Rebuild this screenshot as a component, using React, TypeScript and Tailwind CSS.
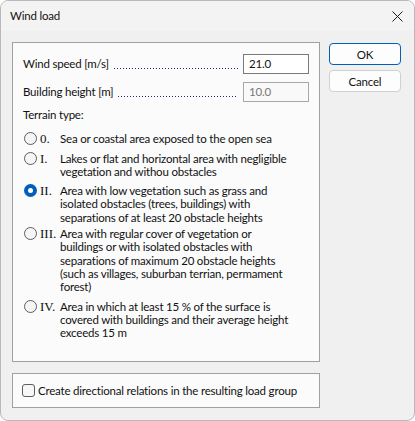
import { useState } from "react";

type Terrain = {
  id: string;
  lines: string[];
  gap: string;
};

const terrains: Terrain[] = [
  { id: "0.", lines: ["Sea or coastal area exposed to the open sea"], gap: "mt-[11px]" },
  {
    id: "I.",
    lines: ["Lakes or flat and horizontal area with negligible", "vegetation and withou obstacles"],
    gap: "mt-[6px]",
  },
  {
    id: "II.",
    lines: [
      "Area with low vegetation such as grass and",
      "isolated obstacles (trees, buildings) with",
      "separations of at least 20 obstacle heights",
    ],
    gap: "mt-[6px]",
  },
  {
    id: "III.",
    lines: [
      "Area with regular cover of vegetation or",
      "buildings or with isolated obstacles with",
      "separations of maximum 20 obstacle heights",
      "(such as villages, suburban terrian, permament",
      "forest)",
    ],
    gap: "mt-[3px]",
  },
  {
    id: "IV.",
    lines: [
      "Area in which at least 15 % of the surface is",
      "covered with buildings and their average height",
      "exceeds 15 m",
    ],
    gap: "mt-[6px]",
  },
];

function Radio({ checked }: { checked: boolean }) {
  if (checked) {
    return (
      <span className="w-[13px] h-[13px] rounded-full bg-[#005fb8] flex items-center justify-center shrink-0">
        <span className="w-[5px] h-[5px] rounded-full bg-white" />
      </span>
    );
  }
  return <span className="block w-[13px] h-[13px] rounded-full border border-[#5d5d5d] bg-[#f5f5f5] shrink-0" />;
}

function FieldRow({
  label,
  value,
  disabled,
  className,
}: {
  label: string;
  value: string;
  disabled?: boolean;
  className?: string;
}) {
  return (
    <div className={"flex items-center h-[20px] " + (className ?? "")}>
      <span className="whitespace-nowrap">{label}</span>
      {/* dotted leader */}
      <div className="flex-1 self-end mb-[5px] ml-[5px] mr-[5px] h-[1px] bg-[linear-gradient(to_right,#2d2470_1px,transparent_1px)] bg-[length:3px_1px] bg-repeat-x" />
      <div
        className={
          "w-[66px] h-[20px] border flex items-center pl-[5px] " +
          (disabled
            ? "border-[#a8a8a8] bg-[#f9f9f9] text-[#777777]"
            : "border-[#7a7a7a] bg-white text-[#111111]")
        }
      >
        {value}
      </div>
    </div>
  );
}

export default function App() {
  const [selected] = useState("II.");

  return (
    <div
      className="w-[415px] h-[421px] bg-[#f0f0f0] border border-[#b9b9b9] rounded-[8px] overflow-hidden text-[11.5px] tracking-[-0.2px] leading-[13.3px] text-[#111111] flex flex-col"
      style={{ fontFamily: 'Lato, "Noto Sans", sans-serif' }}
    >
      {/* title bar */}
      <div className="h-[30px] bg-[#f3f3f3] flex items-center justify-between pl-[9px] pr-[10px] shrink-0">
        <span>Wind load</span>
        <svg width="11" height="11" viewBox="0 0 11 11" className="mr-[1px]">
          <path d="M0.5 0.5 L10.5 10.5 M10.5 0.5 L0.5 10.5" stroke="#1a1a1a" strokeWidth="1" />
        </svg>
      </div>

      <div className="flex pl-[11px] pt-[11px] gap-[9px]">
        <div className="w-[308px] flex flex-col gap-[11px]">
          <div className="h-[320px] border border-[#a0a0a0] bg-[#fbfbfb] px-[10px] pt-[11px]">
            <FieldRow label="Wind speed [m/s]" value="21.0" />
            <FieldRow label="Building height [m]" value="10.0" disabled className="mt-[8px]" />
            <div className="mt-[6px]">Terrain type:</div>

            {terrains.map((t) => (
              <div key={t.id} className={"flex items-start " + t.gap}>
                <span className="flex ml-[1px] mr-[3px]">
                  <Radio checked={t.id === selected} />
                </span>
                <span
                  className="w-[20px] shrink-0 text-[13px] tracking-normal"
                  style={{ fontFamily: '"Liberation Serif", serif' }}
                >
                  {t.id}
                </span>
                <div className="whitespace-nowrap">
                  {t.lines.map((l, i) => (
                    <div key={i}>{l}</div>
                  ))}
                </div>
              </div>
            ))}
          </div>

          <div className="h-[35px] border border-[#a0a0a0] bg-[#fbfbfb] flex items-center pl-[9px]">
            <span className="w-[13px] h-[13px] rounded-[3px] border border-[#5d5d5d] bg-[#f7f7f7] mr-[3px] shrink-0" />
            <span className="whitespace-nowrap">Create directional relations in the resulting load group</span>
          </div>
        </div>

        <div className="w-[72px] flex flex-col">
          <button className="mt-[1px] h-[22px] rounded-[4px] border border-[#005fb8] bg-[#fdfdfd] leading-[13px]">
            OK
          </button>
          <button className="mt-[5px] h-[22px] rounded-[4px] border border-[#d0d0d0] bg-[#fdfdfd] leading-[13px]">
            Cancel
          </button>
        </div>
      </div>
    </div>
  );
}
